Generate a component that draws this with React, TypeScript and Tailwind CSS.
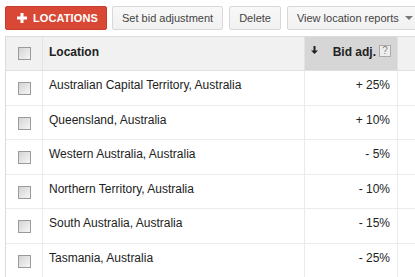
import React from 'react';

interface Row {
  name: string;
  bid: string;
}

const rows: Row[] = [
  { name: 'Australian Capital Territory, Australia', bid: '+ 25%' },
  { name: 'Queensland, Australia', bid: '+ 10%' },
  { name: 'Western Australia, Australia', bid: '- 5%' },
  { name: 'Northern Territory, Australia', bid: '- 10%' },
  { name: 'South Australia, Australia', bid: '- 15%' },
  { name: 'Tasmania, Australia', bid: '- 25%' },
];

function Checkbox() {
  return (
    <div className="w-[13px] h-[13px] border border-[#9a9a9a] bg-gradient-to-br from-[#d4d4d4] to-[#f6f6f6]" />
  );
}

function GrayButton({ children }: { children: React.ReactNode }) {
  return (
    <button className="h-[24px] shrink-0 flex items-center px-[9px] border border-[#d8d8d8] rounded-[2px] bg-gradient-to-b from-[#f8f8f8] to-[#f1f1f1] text-[11px] text-[#444] whitespace-nowrap">
      {children}
    </button>
  );
}

export default function App() {
  return (
    <div
      className="w-[415px] h-[277px] overflow-hidden bg-white"
      style={{ fontFamily: '"Liberation Sans", Arial, sans-serif' }}
    >
      <div className="flex items-center gap-[5px] pl-[5px] pt-[6px] w-[600px]">
        <button className="h-[24px] w-[102px] shrink-0 flex items-center pl-[11px] rounded-[2px] border border-[#c83e2c] bg-[#d94835] text-white text-[11px] font-bold tracking-[0.1px]">
          <svg width="10" height="10" viewBox="0 0 10 10" className="mr-[6px]">
            <rect x="3.5" y="0" width="3" height="10" fill="#fff" />
            <rect x="0" y="3.5" width="10" height="3" fill="#fff" />
          </svg>
          LOCATIONS
        </button>
        <GrayButton>Set bid adjustment</GrayButton>
        <div className="ml-px">
          <GrayButton>Delete</GrayButton>
        </div>
        <div className="ml-px">
          <GrayButton>
            View location reports
            <span className="ml-[6px] inline-block w-0 h-0 border-l-[4px] border-r-[4px] border-t-[4px] border-l-transparent border-r-transparent border-t-[#777]" />
          </GrayButton>
        </div>
      </div>

      <div className="ml-[5px] mt-[6px] w-[460px] border-l border-t border-[#dcdcdc] text-[12px] text-[#222]">
        <div className="grid grid-cols-[37px_262px_93px_1fr] h-[34px] bg-[#f1f1f1] border-b border-[#e0e0e0]">
          <div className="border-r border-[#e3e3e3] flex justify-center pt-[10px]">
            <Checkbox />
          </div>
          <div className="border-r border-[#e3e3e3] pl-[6px] pt-[7px] font-bold leading-[16px]">Location</div>
          <div className="bg-[#d6d6d6] border-r border-[#e3e3e3] flex items-start pt-[7px] pl-[6px] pr-[6px] leading-[16px]">
            <svg width="7" height="8" viewBox="0 0 7 8" className="mt-[2px]">
              <path d="M2.5 0h2v4.5h2.5L3.5 8 0 4.5h2.5z" fill="#222" />
            </svg>
            <span className="ml-auto font-bold">Bid adj.</span>
            <span className="ml-[3px] mt-px w-[12px] h-[12px] border border-[#aaa] bg-[#eee] text-[#888] text-[10px] leading-[10px] flex items-center justify-center">
              ?
            </span>
          </div>
          <div />
        </div>
        {rows.map((r) => (
          <div key={r.name} className="grid grid-cols-[37px_262px_93px_1fr] h-[34.5px] border-b border-[#ebebeb]">
            <div className="border-r border-[#ebebeb] flex justify-center pt-[11px]">
              <Checkbox />
            </div>
            <div className="border-r border-[#ebebeb] pl-[6px] pt-[6px] leading-[16px] whitespace-nowrap">{r.name}</div>
            <div className="border-r border-[#ebebeb] pr-[7px] pt-[6px] leading-[16px] text-right">{r.bid}</div>
            <div />
          </div>
        ))}
        <div className="grid grid-cols-[37px_262px_93px_1fr] h-[34px]">
          <div className="border-r border-[#ebebeb]" />
          <div className="border-r border-[#ebebeb]" />
          <div className="border-r border-[#ebebeb]" />
          <div />
        </div>
      </div>
    </div>
  );
}
